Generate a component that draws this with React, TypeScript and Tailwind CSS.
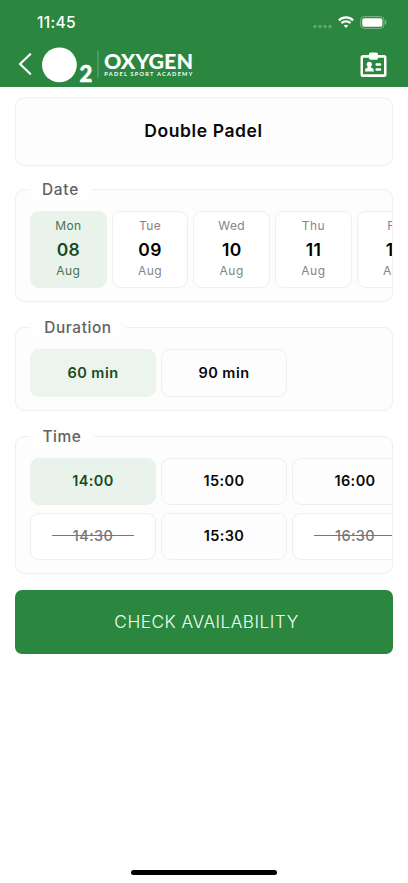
import React from "react";

const days = [
  { name: "Mon", date: "08", selected: true },
  { name: "Tue", date: "09" },
  { name: "Wed", date: "10" },
  { name: "Thu", date: "11" },
  { name: "Fri", date: "12" },
];

const times = [
  { label: "14:00", selected: true },
  { label: "15:00" },
  { label: "16:00" },
  { label: "14:30", disabled: true },
  { label: "15:30" },
  { label: "16:30", disabled: true },
];

function Panel({ title, className, legendClass, children }: { title: string; className: string; legendClass: string; children: React.ReactNode }) {
  return (
    <section className={`flex flex-col items-start rounded-[9px] border border-[#efefef] bg-[#fdfdfd] ${className}`}>
      <h2 className={`ml-[14px] -mt-[12px] h-6 shrink-0 whitespace-nowrap bg-[#fefefe] text-center text-[15.4px] font-medium leading-6 text-[#626262] ${legendClass}`}>
        {title}
      </h2>
      <div className="w-full overflow-hidden pl-[14px] pt-[9px]">{children}</div>
    </section>
  );
}

function Header() {
  return (
    <header className="h-[87px] bg-[#2b873f] text-white">
      <div className="flex h-[44px] items-center pl-[37px] pr-[21px] pt-[2px]">
        <span className="text-[15.5px] font-medium leading-5 tracking-[0.3px]">11:45</span>
        <div className="ml-auto flex items-center">
          <svg width="19" height="5" viewBox="0 0 19 5" className="mr-[6px] mt-[7px]" fill="#62a572">
            <circle cx="2" cy="2.5" r="1.7" /><circle cx="7" cy="2.5" r="1.7" /><circle cx="12" cy="2.5" r="1.7" /><circle cx="17" cy="2.5" r="1.7" />
          </svg>
          <svg width="16" height="12" viewBox="0 0 16 12" fill="none" stroke="white" strokeWidth="2.2" className="-mt-[2px]">
            <path d="M.9 4.4C4.9.4 11.1.4 15.1 4.4" />
            <path d="M3.5 7.1c2.5-2.4 6.5-2.4 9 0" />
            <path d="M8 12 5.7 9.6c1.3-1.2 3.3-1.2 4.6 0Z" fill="white" stroke="none" />
          </svg>
          <svg width="27" height="13" viewBox="0 0 27 13" className="-mt-[2px] ml-[6px]">
            <rect x=".6" y=".6" width="23.4" height="11.8" rx="3.6" fill="none" stroke="#80b68b" />
            <rect x="2.2" y="2.2" width="20.2" height="8.6" rx="2" fill="white" />
            <path d="M25 4.3c1.8.6 1.8 3.8 0 4.4Z" fill="#80b68b" />
          </svg>
        </div>
      </div>
      <div className="flex h-[43px] items-center pl-[18px] pr-[21px]">
        <svg width="14" height="22" viewBox="0 0 14 22" fill="none" stroke="white" strokeWidth="2.2" strokeLinecap="round" strokeLinejoin="round" className="-mt-[4px]">
          <path d="M12.2 1.2 2 11l10.2 9.8" />
        </svg>
        <svg width="154" height="38" viewBox="0 0 154 38" className="-mt-[1px] ml-[9px]" fill="white">
          <circle cx="18.4" cy="18.9" r="17.4" />
          <text x="38.6" y="35.6" fontFamily="Lato" fontWeight="900" fontSize="23" stroke="white" strokeWidth=".6" textLength="12.8" lengthAdjust="spacingAndGlyphs">2</text>
          <path d="M57 5v27" stroke="#80b68b" strokeWidth=".8" />
          <text x="63" y="23.3" fontFamily="Lato" fontWeight="900" fontSize="20.5" textLength="89" lengthAdjust="spacingAndGlyphs">OXYGEN</text>
          <text x="63.3" y="29.9" fontFamily="Lato" fontWeight="700" fontSize="5.6" textLength="88" lengthAdjust="spacing">PADEL SPORT ACADEMY</text>
        </svg>
        <svg width="27" height="26" viewBox="0 0 27 26" className="-mt-[1px] ml-auto" fill="white">
          <path fillRule="evenodd" d="M3 3h6V2a1.5 1.5 0 0 1 1.500-1.500h6A1.500 1.500 0 0 1 18 2v1h6a2.500 2.500 0 0 1 2.500 2.500v17A2.500 2.500 0 0 1 24 25H3a2.500 2.500 0 0 1-2.500-2.500v-17A2.500 2.500 0 0 1 3 3Zm0 2.800v16.400h21V5.800h-6v.5A1.500 1.500 0 0 1 16.500 7.800h-6A1.500 1.500 0 0 1 9 6.300v-.5Z" />
          <circle cx="9.300" cy="12.300" r="2.600" />
          <path d="M7.800 13h3v2.500c2 .4 3 1.300 3 3.900H5c0-2.600 1-3.500 2.800-3.900Z" />
          <rect x="15.500" y="11.200" width="5.700" height="2.500" rx="1" />
          <rect x="15.500" y="16.200" width="5.700" height="2.500" rx="1" />
        </svg>
      </div>
    </header>
  );
}

export default function App() {
  return (
    <div className="flex h-[883px] w-[408px] flex-col overflow-hidden bg-white font-[Inter,'Noto_Sans',sans-serif]">
      <Header />
      <main className="flex flex-col px-[15px] pt-[10px]">
        <div className="flex h-[69px] items-center justify-center rounded-[9px] border border-[#efefef] bg-[#fdfdfd] pr-[1px] text-[17.5px] font-semibold tracking-[0.6px] text-[#090909]">
          Double Padel
        </div>

        <Panel title="Date" className="mt-[23px] h-[113px]" legendClass="w-[62px] pr-[1px] tracking-[0.8px]">
          <div className="flex gap-[5px]">
            {days.map((day) => (
              <button
                key={day.name}
                className={`flex h-[77px] w-[76.700px] shrink-0 flex-col items-center rounded-[9px] border pt-[5px] ${day.selected ? "border-[#e9f2eb] bg-[#e9f2eb] text-[#174b24]" : "border-[#efefef] bg-white text-black"}`}
              >
                <span className={`text-[12px] leading-[17px] tracking-[0.400px] ${day.selected ? "text-[#477351]" : "text-[#858585]"}`}>{day.name}</span>
                <span className="mt-[4px] text-[17.500px] font-semibold leading-6 tracking-[0.300px]">{day.date}</span>
                <span className={`text-[12px] leading-[17px] tracking-[0.500px] ${day.selected ? "text-[#477351]" : "text-[#858585]"}`}>Aug</span>
              </button>
            ))}
          </div>
        </Panel>

        <Panel title="Duration" className="mt-[25px] h-[84px]" legendClass="w-[96px] tracking-[0.6px]">
          <div className="flex gap-[5px]">
            <button className="h-[48px] w-[126px] rounded-[9px] border border-[#ebf4ed] bg-[#ebf4ed] pb-[1px] text-[14.500px] font-semibold tracking-[0.450px] text-[#174b24]">60 min</button>
            <button className="h-[48px] w-[126px] rounded-[9px] border border-[#efefef] bg-[#fdfdfd] pb-[1px] text-[14.500px] font-semibold tracking-[0.450px] text-[#090909]">90 min</button>
          </div>
        </Panel>

        <Panel title="Time" className="mt-[25px] h-[138px]" legendClass="w-[64px] tracking-[0.6px]">
          <div className="grid w-[388px] grid-cols-[126px_126px_126px] gap-x-[5px] gap-y-[8px]">
            {times.map((time) => (
              <button
                key={time.label}
                className={`relative h-[47px] rounded-[9px] border pb-[1px] text-[14.500px] tracking-[0.400px] ${time.selected ? "border-[#e9f2eb] bg-[#e9f2eb] font-semibold text-[#174b24]" : time.disabled ? "border-[#efefef] bg-white font-medium text-[#777777]" : "border-[#efefef] bg-[#fdfdfd] font-semibold text-[#090909]"}`}
              >
                {time.label}
                {time.disabled && <span className="absolute left-[21px] top-[21px] h-px w-[82px] bg-[#777777]" />}
              </button>
            ))}
          </div>
        </Panel>

        <button className="mt-[16px] h-[64px] rounded-[7px] bg-[#2b873f] pb-[1px] pl-[5px] text-[17.300px] font-light tracking-[0.480px] text-[#f0fff2]">
          CHECK AVAILABILITY
        </button>
      </main>
      <div className="mx-auto mb-[8px] mt-auto h-[5px] w-[146px] shrink-0 rounded-full bg-black" />
    </div>
  );
}
